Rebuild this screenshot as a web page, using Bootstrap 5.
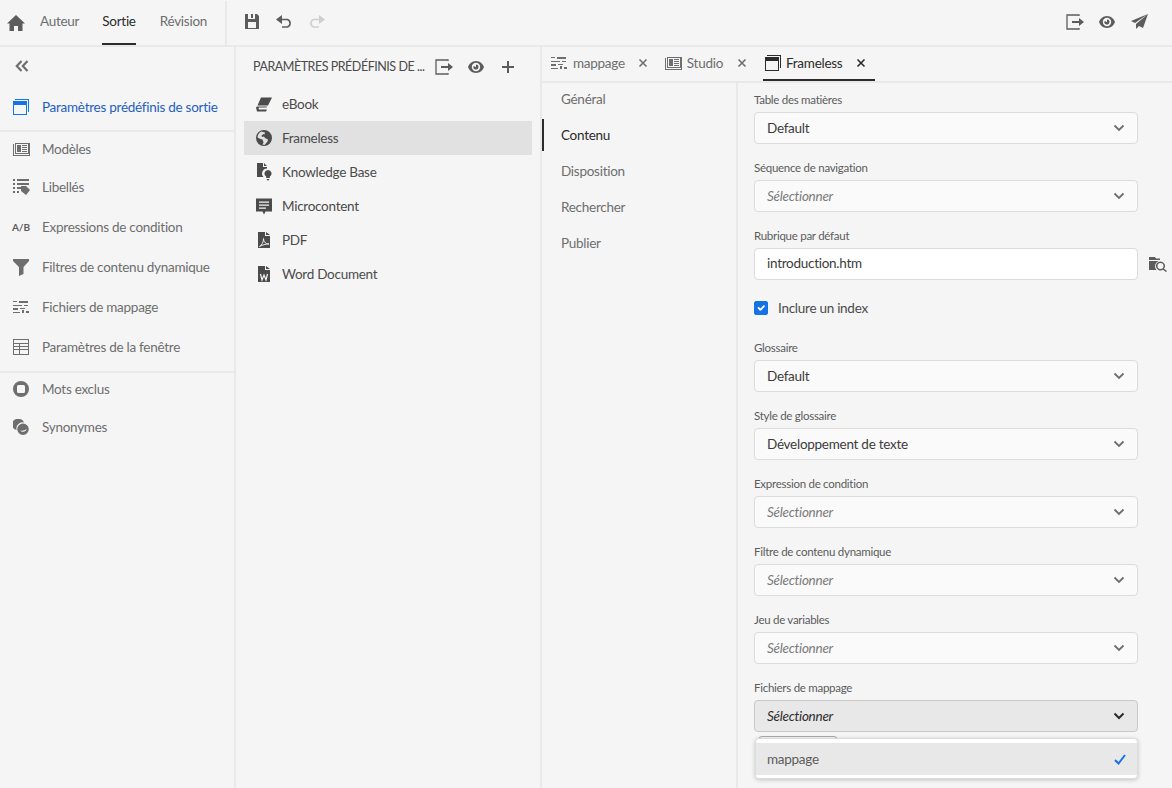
<!DOCTYPE html>
<html lang="fr">
<head>
<meta charset="utf-8">
<title>Sortie</title>
<link href="https://cdn.jsdelivr.net/npm/bootstrap@5.3.0/dist/css/bootstrap.min.css" rel="stylesheet">
<style>
html,body{height:100%;overflow:hidden}
body{background:#f5f5f5;color:#4b4b4b;font-family:"Lato","Liberation Sans",sans-serif;font-size:13.5px;letter-spacing:-.27px;width:1172px;height:788px}
svg{display:block;flex:none;fill:currentColor}
.topbar{height:47px;border-bottom:2px solid #e9e9e9;padding-left:7px}
.tico{color:#5c5c5c}
.tup{margin-bottom:2px}
.mode{align-self:stretch;display:flex;align-items:center;color:#6e6e6e;border-bottom:2px solid transparent;padding-bottom:1px}
.mode.on{color:#2c2c2c;border-bottom-color:#2c2c2c}
.m1{margin-left:15px}.m2{margin-left:23px}.m3{margin-left:24px}.m4{margin-left:18px}.m5{margin-left:18px}.m5b{margin-left:17px}.m6{margin-left:15px}
.vsep{width:2px;align-self:stretch;margin-top:1px;background:#e9e9e9}
.shell{height:741px}
.side{width:236px;border-right:2px solid #e9e9e9;flex:none;color:#6e6e6e}
.collapse-row{height:37px;padding:1px 0 0 15px;color:#6e6e6e}
.sitem{padding-left:12px;gap:12px;display:flex;align-items:center;white-space:nowrap}
.sitem .ibox{width:18px;display:flex;justify-content:center;flex:none}
.sitem.cur{height:48px;color:#1f5fbf;border-bottom:2px solid #e9e9e9}
.sitem.cur svg{color:#1473e6}
.sitem.h32{height:32px}
.sitem.h34{height:34px}
.sitem.h38{height:38px}
.sitem.h40{height:40px}
.mt1x{margin-top:1px}.mt2x{margin-top:2px}.mt3x{margin-top:3px}
.hsep{height:2px;margin-top:4px;background:#e9e9e9}
.ab{font-size:10px;font-weight:700;color:#5c5c5c;letter-spacing:0}
.mid{width:306px;border-right:2px solid #e9e9e9;flex:none}
.midhead{height:40px;padding:0 0 0 17px;color:#4b4b4b}
.midtitle{width:171px;font-size:12.5px;letter-spacing:-.47px;white-space:nowrap}
.midlist{margin:0 8px;--bs-list-group-bg:transparent;--bs-list-group-border-width:0;--bs-list-group-border-radius:0;--bs-list-group-item-padding-x:12px;--bs-list-group-item-padding-y:0;--bs-list-group-color:#4b4b4b}
.midlist .list-group-item{height:34px;display:flex;align-items:center;gap:10px}
.midlist .list-group-item.sel{background:#e1e1e1}
.midlist svg{color:#4b4b4b}
.right{min-width:0;flex:1}
.tabsbar{height:36px;border-bottom:2px solid #e9e9e9;padding-left:9px;align-items:flex-start}
.tabx{height:34px;display:flex;align-items:center;gap:5px;color:#6e6e6e;border-bottom:2px solid transparent}
.tabx.t1{gap:6px}
.tabx.t2{margin-left:17px}
.tabx.on{color:#2c2c2c;border-bottom-color:#2c2c2c;padding:0 9px 0 2px;margin-left:16px}
.tabx .xx{color:#6e6e6e;margin-left:9px}
.tabx.t1 .xx{margin-left:7px}
.tabx.on .xx{color:#2c2c2c}
.pane{height:705px}
.vnav{width:196px;border-right:2px solid #e9e9e9;flex:none;color:#6e6e6e}
.vnav div{height:36px;display:flex;align-items:center;padding-left:19px}
.vnav div:first-child{margin-top:-2px}
.vnav div.on{color:#2c2c2c;position:relative}
.vnav div.on::before{content:"";position:absolute;left:0;top:2px;bottom:2px;width:2px;background:#2c2c2c}
.formcol{padding:0 0 0 16px;position:relative}
.fgroup{height:68px;padding-top:9px;width:384px}
.flabel{font-size:11.5px;line-height:16px;height:20px;margin:0;color:#5c5c5c;display:block}
.form-select.fsel,.form-control.fsel{height:32px;width:384px;font-family:inherit;font-size:13.5px;letter-spacing:inherit;color:#3c3c3c;padding:0 32px 0 12px;border:1px solid #dcdcdc;border-radius:4px;background-color:#fff;box-shadow:none;line-height:30px}
.form-control.fsel{padding-bottom:2px}
.form-select.fsel{background-color:#fafafa;background-size:12px 8px;background-position:right 12px center;background-image:url("data:image/svg+xml,%3csvg xmlns='http://www.w3.org/2000/svg' viewBox='0 0 12 8'%3e%3cpath fill='none' stroke='%236e6e6e' stroke-width='1.800' d='M1.500 1.500l4.500 4.500 4.500-4.500'/%3e%3c/svg%3e")}
.form-select.fsel.ph{font-style:italic;color:#7a7a7a}
.form-select.fsel.opened{background-color:#e8e8e8;border-color:#c8c8c8;color:#2c2c2c;background-image:url("data:image/svg+xml,%3csvg xmlns='http://www.w3.org/2000/svg' viewBox='0 0 12 8'%3e%3cpath fill='none' stroke='%232c2c2c' stroke-width='2' d='M1.500 1.500l4.500 4.500 4.500-4.500'/%3e%3c/svg%3e")}
.inpwrap{display:flex;align-items:center;gap:11px;width:404px}
.inpwrap .fsel{flex:none}
.inpwrap svg{color:#5c5c5c}
.chkrow{height:44px;margin:0;display:flex;align-items:center;gap:10px;padding:0 0 2px;color:#4b4b4b;min-height:0}
.chkrow .form-check-input{float:none;margin:0;width:14px;height:14px;border-radius:2px;background-color:#1473e6;border-color:#1473e6}
.chkrow .form-check-label{line-height:20px}
.chip{position:absolute;left:20px;top:653px;width:80px;height:12px;border:1px solid #a8a8a8;border-radius:4px;background:#f5f5f5}
.dropx{position:absolute;left:17px;top:655px;width:383px;height:41px;padding:4px 0;background:#fff;border:1px solid #dcdcdc;border-radius:4px;box-shadow:0 1px 4px rgba(0,0,0,.2)}
.dropx .opt{height:32px;background:#e8e8e8;display:flex;align-items:center;justify-content:space-between;padding:0 11px;color:#5c5c5c}
.dropx svg{color:#1473e6}
</style>
</head>
<body>
<svg width="0" height="0" class="position-absolute">
<defs>
<symbol id="i-export" viewBox="0 0 18 16"><path fill="none" stroke="currentColor" stroke-width="1.300" d="M13 2V1H1v14h12v-1"/><path d="M6 7h7V4l5 4-5 4V9H6z"/></symbol>
<symbol id="i-eye" viewBox="0 0 16 12"><path fill-rule="evenodd" d="M8 0c4 0 7 3 8 6-1 3-4 6-8 6S1 9 0 6c1-3 4-6 8-6zm0 1.800A4.200 4.200 0 1 0 8 10.200 4.200 4.200 0 0 0 8 1.800zM8 3.500a2.500 2.500 0 1 1-2.300 1.500L8 6z"/></symbol>
<symbol id="i-map" viewBox="0 0 16 14"><path d="M6 1h9v2H6zM0 1h4v1H0zM0 5h9v1H0zM11 5h4v1h-4zM0 8h5v2H0zM7 8h5v1H7zM0 12h7v1H0zM9 10h2v3H9zM13 11h3v2h-3z"/></symbol>
<symbol id="i-win" viewBox="0 0 16 16"><path fill-rule="evenodd" d="M2 0h14v13h-1V1H2zM0 2h14v14H0zm1 4v9h12V6z"/></symbol>
<symbol id="i-news" viewBox="0 0 17 13"><path fill-rule="evenodd" d="M0 1h1v11h15V0h1v13H0zM2 0h14v11H2zm1 1v9h12V1zM4 2h4v7H4zm5 0h5v1H9zm0 2h5v1H9zm0 2h5v1H9zm0 2h5v1H9z"/></symbol>
<symbol id="i-x" viewBox="0 0 10 10"><path fill="none" stroke="currentColor" stroke-width="1.600" d="M1.500 1.500l7 7m0-7l-7 7"/></symbol>
</defs>
</svg>

<header class="topbar d-flex align-items-center">
  <svg class="tico" width="18" height="16" viewBox="0 0 18 16"><path d="M9 0l9 8.500h-2.500V16H11v-5H7v5H2.500V8.500H0z"/></svg>
  <span class="mode m1">Auteur</span>
  <span class="mode on m2">Sortie</span>
  <span class="mode m3">Révision</span>
  <span class="vsep m4"></span>
  <svg class="tico tup m5" width="14" height="15" viewBox="0 0 14 15"><path fill-rule="evenodd" d="M0 0h12l2 2v13H0zM3 0v5h7V0H8v4H6V0zM3 8v6h8V8z"/></svg>
  <svg class="tico tup m5b" width="17" height="13" viewBox="0 0 17 13"><path fill="none" stroke="currentColor" stroke-width="1.600" d="M1.500 4.500h10a4 4 0 0 1 0 7.500H6"/><path d="M6 0v9L0 4.500z"/></svg>
  <svg class="tup m6" style="color:#cfcfcf" width="17" height="13" viewBox="0 0 17 13"><path fill="none" stroke="currentColor" stroke-width="1.600" d="M15.500 4.500h-10a4 4 0 0 0 0 7.500H11"/><path d="M11 0v9l6-4.500z"/></svg>
  <div class="ms-auto d-flex align-items-center tico tup">
    <svg width="18" height="16"><use href="#i-export"/></svg>
    <svg style="margin-left:15px" width="16" height="12"><use href="#i-eye"/></svg>
    <svg style="margin-left:16px;margin-right:24px" width="17" height="15" viewBox="0 0 17 15"><path d="M17 0L0 7l4 2zM17 0L5 10v5l3-3 4 2z"/></svg>
  </div>
</header>

<div class="shell d-flex">
  <nav class="side">
    <div class="collapse-row d-flex align-items-center">
      <svg width="14" height="12" viewBox="0 0 14 12"><path fill="none" stroke="currentColor" stroke-width="2.200" d="M6.500 1L1.800 6l4.700 5M12.500 1L7.800 6l4.700 5"/></svg>
    </div>
    <div class="sitem cur"><span class="ibox"><svg width="16" height="16"><use href="#i-win"/></svg></span>Paramètres prédéfinis de sortie</div>
    <div class="sitem h34"><span class="ibox"><svg width="17" height="13"><use href="#i-news"/></svg></span>Modèles</div>
    <div class="sitem h38 mt2x"><span class="ibox"><svg width="17" height="16" viewBox="0 0 17 16"><path d="M0 0h2v2H0zM0 4h2v2H0zM0 8h2v2H0zM0 12h2v2H0zM4 0h12v2H4zM4 4h12v2H4zM4 8h4v2H4zM4 12h2v2H4zM8 7h5l4 4-4 5-5-4z"/></svg></span>Libellés</div>
    <div class="sitem h40 mt1x"><span class="ibox ab">A/B</span>Expressions de condition</div>
    <div class="sitem h40"><span class="ibox"><svg width="16" height="17" viewBox="0 0 16 17"><path d="M0 0h16v2l-5.500 6v7L6 17V8L0 2z"/></svg></span>Filtres de contenu dynamique</div>
    <div class="sitem h40"><span class="ibox"><svg width="16" height="14"><use href="#i-map"/></svg></span>Fichiers de mappage</div>
    <div class="sitem h40"><span class="ibox"><svg width="16" height="16" viewBox="0 0 16 16"><path fill-rule="evenodd" d="M0 0h16v16H0zm1 1v3h14V1zm0 4v2h5V5zm6 0v2h8V5zM1 8v2h5V8zm6 0v2h8V8zM1 11v4h5v-4zm6 0v4h8v-4z"/></svg></span>Paramètres de la fenêtre</div>
    <div class="hsep"></div>
    <div class="sitem h32"><span class="ibox"><svg width="16" height="16" viewBox="0 0 16 16"><path fill-rule="evenodd" d="M8 0a8 8 0 1 1 0 16A8 8 0 0 1 8 0zM5.500 4A1.500 1.500 0 0 0 4 5.500v5A1.500 1.500 0 0 0 5.500 12h5a1.500 1.500 0 0 0 1.500-1.500v-5A1.500 1.500 0 0 0 10.500 4z"/></svg></span>Mots exclus</div>
    <div class="sitem h38 mt3x"><span class="ibox"><svg width="16" height="16" viewBox="0 0 16 16"><path d="M5.500 0A5.500 5.500 0 0 1 11 3.600 6 6 0 0 0 3.600 11 5.500 5.500 0 0 1 5.500 0z"/><path fill-rule="evenodd" d="M10 4.500a5.750 5.750 0 1 1 0 11.500 5.750 5.750 0 0 1 0-11.500zm-3 7a4 4 0 0 0 6.800-1.500A8 8 0 0 1 7 11.500z"/></svg></span>Synonymes</div>
  </nav>

  <section class="mid">
    <div class="midhead d-flex align-items-center">
      <span class="midtitle">PARAMÈTRES PRÉDÉFINIS DE ...</span>
      <svg style="margin-left:11px;color:#5c5c5c" width="18" height="16"><use href="#i-export"/></svg>
      <svg style="margin-left:15px;color:#5c5c5c" width="16" height="12"><use href="#i-eye"/></svg>
      <svg style="margin-left:18px;color:#5c5c5c" width="12" height="12" viewBox="0 0 12 12"><path d="M5 0h2v5h5v2H7v5H5V7H0V5h5z"/></svg>
    </div>
    <div class="list-group midlist">
      <div class="list-group-item"><svg width="16" height="15" viewBox="0 0 16 14"><path d="M5 0h11l-4 8H1.500zM0 10l1-1h10l-.5 1H3q-1 1 0 2h8l-1 2H1z"/></svg>eBook</div>
      <div class="list-group-item sel"><svg width="16" height="16" viewBox="0 0 16 16"><path d="M8 0a8 8 0 1 1 0 16A8 8 0 0 1 8 0zM5.500 1.500C3 2.500 1.500 5 1.500 7.500l3 1.500 2 .5 1 3-1 2 2 .5 3-3.500.500-2-3-1.500-1-1.500-2 .5-.5-1.500 2-1.500 1 .5.500-2L7 2z"/></svg>Frameless</div>
      <div class="list-group-item"><svg width="16" height="18" viewBox="0 0 16 18"><path d="M1 0h6v4h4v1.500A5 5 0 0 0 7.500 14H1zM8 0l3 3H8z"/><path d="M12 7a3.500 3.500 0 0 1 1.800 6.500V15h-3.600v-1.500A3.500 3.500 0 0 1 12 7zM10.500 16h3l-1 1.500h-1z"/></svg>Knowledge Base</div>
      <div class="list-group-item"><svg width="16" height="17" viewBox="0 0 16 16"><path fill-rule="evenodd" d="M0 0h16v13H9.500L8 16l-1.500-3H0zm3 3v1.200h10V3zm0 3v1.200h10V6zm0 3v1.200h7V9z"/></svg>Microcontent</div>
      <div class="list-group-item"><svg width="16" height="16" viewBox="0 0 16 16"><path d="M2 0h7v4h5v12H2z"/><path d="M10 0l4 3h-4z"/><path fill="none" stroke="#f5f5f5" stroke-width=".9" d="M3.500 14.500C6 13 7.500 10 7.500 6.500c0 3.500 2 5.500 5.500 5.500-3.500 0-6.500 1-9.500 2.500z"/></svg>PDF</div>
      <div class="list-group-item"><svg width="16" height="16" viewBox="0 0 16 16"><path d="M2 0h7v4h5v12H2zM10 0l4 3h-4z"/><path fill="none" stroke="#f5f5f5" stroke-width="1.200" d="M4.500 8l1.500 6 2-5 2 5 1.500-6"/></svg>Word Document</div>
    </div>
  </section>

  <main class="right d-flex flex-column">
    <div class="tabsbar d-flex">
      <div class="tabx t1"><svg width="16" height="14"><use href="#i-map"/></svg><span>mappage</span><svg class="xx" width="10" height="10"><use href="#i-x"/></svg></div>
      <div class="tabx t2"><svg width="17" height="13"><use href="#i-news"/></svg><span>Studio</span><svg class="xx" width="10" height="10"><use href="#i-x"/></svg></div>
      <div class="tabx on"><svg width="16" height="16"><use href="#i-win"/></svg><span>Frameless</span><svg class="xx" width="10" height="10"><use href="#i-x"/></svg></div>
    </div>
    <div class="pane d-flex">
      <div class="vnav">
        <div>Général</div>
        <div class="on">Contenu</div>
        <div>Disposition</div>
        <div>Rechercher</div>
        <div>Publier</div>
      </div>
      <form class="formcol flex-grow-1" onsubmit="return false">
        <div class="fgroup"><label class="flabel">Table des matières</label><select class="form-select fsel"><option>Default</option></select></div>
        <div class="fgroup"><label class="flabel">Séquence de navigation</label><select class="form-select fsel ph"><option>Sélectionner</option></select></div>
        <div class="fgroup"><label class="flabel">Rubrique par défaut</label><div class="inpwrap"><input class="form-control fsel" value="introduction.htm"><svg width="18" height="16" viewBox="0 0 18 16"><path d="M0 1h6l1 1.500h4V4H0zM0 5h10a5.500 5.500 0 0 0-2.500 9H0z"/><path fill-rule="evenodd" d="M11.500 5.500a4.500 4.500 0 0 1 3.500 7.300l3 2.200-1 1-3-2.300a4.500 4.500 0 1 1-2.500-8.200zm0 1.500a3 3 0 1 0 0 6 3 3 0 0 0 0-6z"/></svg></div></div>
        <div class="form-check chkrow"><input class="form-check-input" type="checkbox" id="idx" checked><label class="form-check-label" for="idx">Inclure un index</label></div>
        <div class="fgroup"><label class="flabel">Glossaire</label><select class="form-select fsel"><option>Default</option></select></div>
        <div class="fgroup"><label class="flabel">Style de glossaire</label><select class="form-select fsel"><option>Développement de texte</option></select></div>
        <div class="fgroup"><label class="flabel">Expression de condition</label><select class="form-select fsel ph"><option>Sélectionner</option></select></div>
        <div class="fgroup"><label class="flabel">Filtre de contenu dynamique</label><select class="form-select fsel ph"><option>Sélectionner</option></select></div>
        <div class="fgroup"><label class="flabel">Jeu de variables</label><select class="form-select fsel ph"><option>Sélectionner</option></select></div>
        <div class="fgroup"><label class="flabel">Fichiers de mappage</label><select class="form-select fsel ph opened"><option>Sélectionner</option></select></div>
        <span class="chip"></span>
        <div class="dropx"><div class="opt">mappage<svg width="12" height="11" viewBox="0 0 12 11"><path fill="none" stroke="currentColor" stroke-width="2" d="M1 6l3.500 3.500L11 1"/></svg></div></div>
      </form>
    </div>
  </main>
</div>
<script src="https://cdn.jsdelivr.net/npm/bootstrap@5.3.0/dist/js/bootstrap.bundle.min.js"></script>
</body>
</html>
